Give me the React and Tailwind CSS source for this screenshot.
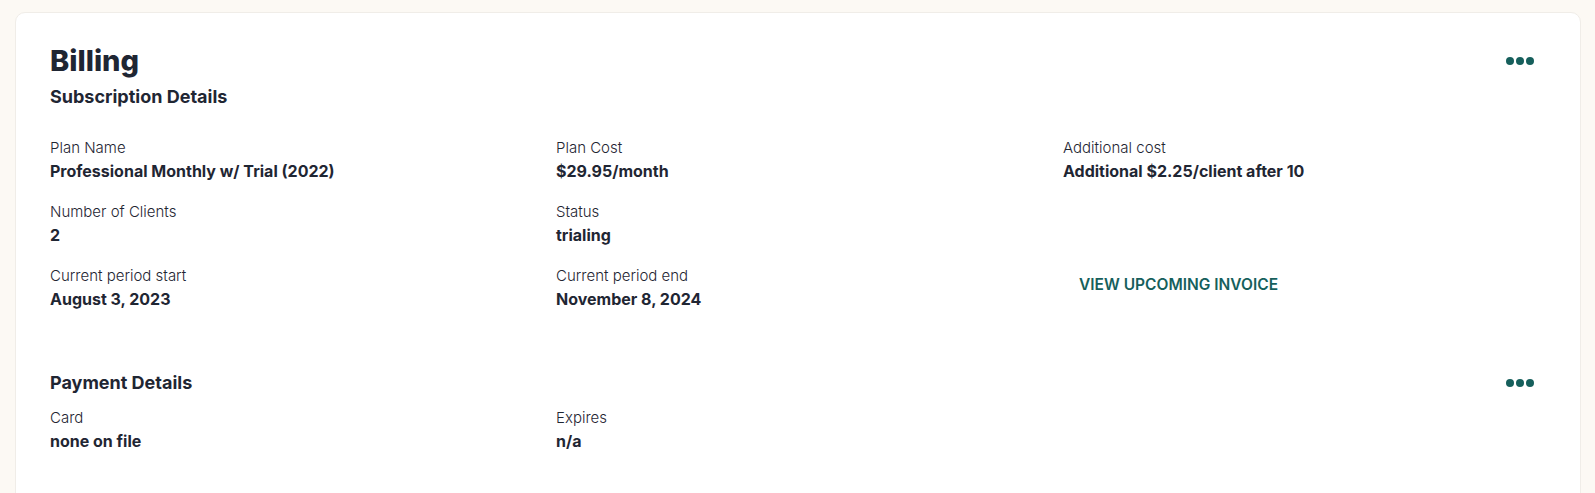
import React from 'react';

const Dots = () => (
    <button className="flex items-center gap-[2px] px-[4px] py-2">
        <span className="w-[8px] h-[8px] rounded-full bg-[#165f5c]"></span>
        <span className="w-[8px] h-[8px] rounded-full bg-[#165f5c]"></span>
        <span className="w-[8px] h-[8px] rounded-full bg-[#165f5c]"></span>
    </button>
);

const Field = ({ label, value }) => (
    <div className="flex flex-col">
        <span className="text-[15px] leading-[24px] font-light text-[#1f2633]">{label}</span>
        <span className="text-[16px] leading-[23px] font-bold text-[#1f2633]">{value}</span>
    </div>
);

export default function App() {
    return (
        <div className="min-h-[493px] bg-[#fcf9f4] pt-[12px] pl-[15px] pr-[14px] overflow-hidden" style={{ fontFamily: 'Inter, "Noto Sans", sans-serif' }}>
            <div className="bg-white rounded-[10px] border border-[#f0ede8] min-h-[500px] pl-[34px] pr-[42px] pt-[30px]">
                <div className="flex items-center justify-between">
                    <h1 className="text-[29px] leading-[36px] font-extrabold text-[#1f2633]">Billing</h1>
                    <Dots />
                </div>
                <h2 className="text-[18px] leading-[24px] font-bold text-[#1f2633] mt-[6px]">Subscription Details</h2>

                <div className="grid grid-cols-[506px_507px_1fr] gap-y-[17px] mt-[27px]">
                    <Field label="Plan Name" value="Professional Monthly w/ Trial (2022)" />
                    <Field label="Plan Cost" value="$29.95/month" />
                    <Field label="Additional cost" value="Additional $2.25/client after 10" />

                    <Field label="Number of Clients" value="2" />
                    <Field label="Status" value="trialing" />
                    <div></div>

                    <Field label="Current period start" value="August 3, 2023" />
                    <Field label="Current period end" value="November 8, 2024" />
                    <div className="flex items-center pb-[6px]">
                        <button className="px-[16px] py-[6px] text-[15.5px] font-semibold uppercase text-[#165f5c]">
                            View upcoming invoice
                        </button>
                    </div>
                </div>

                <div className="flex items-center justify-between mt-[60px]">
                    <h2 className="text-[18px] leading-[24px] font-bold text-[#1f2633]">Payment Details</h2>
                    <Dots />
                </div>
                <div className="grid grid-cols-[506px_507px_1fr] mt-[11px]">
                    <Field label="Card" value="none on file" />
                    <Field label="Expires" value="n/a" />
                </div>
            </div>
        </div>
    );
}
